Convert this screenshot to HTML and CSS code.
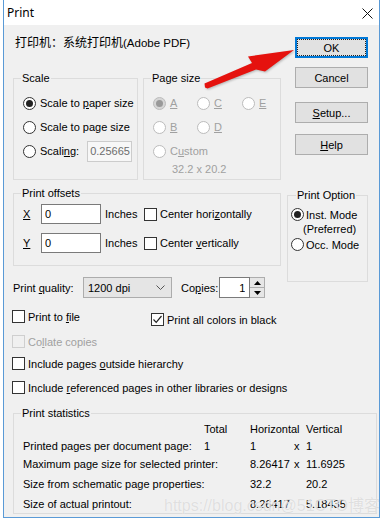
FILE: index.html
```html
<!DOCTYPE html>
<html lang="en">
<head>
    <meta charset="UTF-8">
    <title>Print</title>
    <link rel="stylesheet" href="styles.css">
</head>
<body>
    <div class="window">
        <div class="titlebar">
            <span class="title">Print</span>
            <svg class="close" width="11" height="11" viewBox="0 0 11 11">
                <path d="M0.5 0.5 L10.5 10.5 M10.5 0.5 L0.5 10.5" stroke="#111" stroke-width="1"/>
            </svg>
        </div>

        <div class="content">
            <div class="top">
                <div class="left">
                    <div class="printer">打印机：系统打印机<span class="latin">(Adobe PDF)</span></div>

                    <div class="groups">
                        <fieldset class="group scale">
                            <legend>Scale</legend>
                            <div class="opt"><span class="radio on"></span><span>Scale to <u>p</u>aper size</span></div>
                            <div class="opt"><span class="radio"></span><span>Scale to page size</span></div>
                            <div class="opt"><span class="radio"></span><span>Scali<u>n</u>g:</span><input class="scaling" value="0.25665" disabled></div>
                        </fieldset>

                        <fieldset class="group pagesize">
                            <legend>Page size</legend>
                            <div class="sizes">
                                <div class="opt dim"><span class="radio off on"></span><u>A</u></div>
                                <div class="opt dim"><span class="radio off"></span><u>C</u></div>
                                <div class="opt dim"><span class="radio off"></span><u>E</u></div>
                                <div class="opt dim"><span class="radio off"></span><u>B</u></div>
                                <div class="opt dim"><span class="radio off"></span><u>D</u></div>
                                <div></div>
                                <div class="opt dim custom"><span class="radio off"></span><span>C<u>u</u>stom</span></div>
                            </div>
                            <div class="custom-dim">32.2 x 20.2</div>
                        </fieldset>
                    </div>

                    <fieldset class="group offsets">
                        <legend>Print offsets</legend>
                        <div class="offset-row">
                            <u class="axis">X</u>
                            <input class="field" value="0">
                            <span class="unit">Inches</span>
                            <span class="check"></span><span>Center hori<u>z</u>ontally</span>
                        </div>
                        <div class="offset-row">
                            <u class="axis">Y</u>
                            <input class="field" value="0">
                            <span class="unit">Inches</span>
                            <span class="check"></span><span>Center <u>v</u>ertically</span>
                        </div>
                    </fieldset>
                </div>

                <div class="right">
                    <button class="btn default"><span class="focus">OK</span></button>
                    <button class="btn cancel">Cancel</button>
                    <button class="btn setup"><u>S</u>etup...</button>
                    <button class="btn help"><u>H</u>elp</button>

                    <fieldset class="group option">
                        <legend>Print Option</legend>
                        <div class="opt"><span class="radio on"></span><span>Inst. Mode</span></div>
                        <div class="pref">(Preferred)</div>
                        <div class="opt"><span class="radio"></span><span>Occ. Mode</span></div>
                    </fieldset>
                </div>
            </div>

            <div class="quality-row">
                <span class="quality-label">Print <u>q</u>uality:</span>
                <div class="select">
                    <span>1200 dpi</span>
                    <svg width="9" height="5" viewBox="0 0 9 5"><path d="M0.5 0.5 L4.5 4.5 L8.5 0.5" fill="none" stroke="#555"/></svg>
                </div>
                <span class="copies-label">Co<u>p</u>ies:</span>
                <input class="copies" value="1">
                <div class="spin">
                    <span><svg width="7" height="4" viewBox="0 0 7 4"><path d="M0 4 L3.5 0 L7 4 Z" fill="#000"/></svg></span>
                    <span><svg width="7" height="4" viewBox="0 0 7 4"><path d="M0 0 L3.5 4 L7 0 Z" fill="#000"/></svg></span>
                </div>
            </div>

            <div class="checks">
                <div class="opt first"><span class="check"></span><span>Print to <u>f</u>ile</span></div>
                <div class="opt black">
                    <span class="check">
                        <svg width="11" height="11" viewBox="0 0 11 11"><path d="M1.5 5.5 L4.2 8.3 L9.5 2" fill="none" stroke="#222" stroke-width="1.2"/></svg>
                    </span><span>Print all colors in black</span>
                </div>
            </div>
            <div class="opt dim collate"><span class="check off"></span><span>Co<u>l</u>late copies</span></div>
            <div class="opt include"><span class="check"></span><span>Include pages <u>o</u>utside hierarchy</span></div>
            <div class="opt include2"><span class="check"></span><span>Include <u>r</u>eferenced pages in other libraries or designs</span></div>

            <fieldset class="group stats">
                <legend>Print statistics</legend>
                <div class="stat-grid">
                    <span></span><span>Total</span><span>Horizontal</span><span></span><span>Vertical</span>
                    <span>Printed pages per document page:</span><span>1</span><span>1</span><span>x</span><span>1</span>
                    <span>Maximum page size for selected printer:</span><span></span><span>8.26417</span><span>x</span><span>11.6925</span>
                    <span>Size from schematic page properties:</span><span></span><span>32.2</span><span></span><span>20.2</span>
                    <span>Size of actual printout:</span><span></span><span>8.26417</span><span></span><span>5.18435</span>
                </div>
            </fieldset>
        </div>

        <svg class="arrow" width="100" height="50" viewBox="200 45 100 50">
            <polygon points="203.5,83.5 251,63 247,56.5 293,50 264,71.5 255,69.5 206.5,88.5 204,87.5" fill="#e5120e"/>
        </svg>

        <div class="watermark">https://blog.csdn@51CTO博客</div>
    </div>
</body>
</html>
```

FILE: styles.css
```css
* {
    box-sizing: border-box;
}

html {
    background: #fff;
}

body {
    margin: 0;
    font-family: "Liberation Sans", "Noto Sans CJK SC", sans-serif;
    font-size: 11px;
    color: #000;
}

u {
    text-decoration: underline;
    text-underline-offset: 1px;
}

.window {
    position: relative;
    margin-left: 3px;
    width: 377px;
    height: 518px;
    border: 1px solid #5a9ad6;
    border-top: 0;
    background: #f0f0f0;
    overflow: hidden;
}

.titlebar {
    height: 25px;
    background: #fff;
    display: flex;
    align-items: center;
    justify-content: space-between;
    padding: 0 6px 0 3px;
}

.title {
    font-family: "Noto Sans", sans-serif;
    font-size: 12px;
}

.close {
    margin-top: 1px;
}

.content {
    padding: 0 0 0 9px;
}

/* top part: left column + buttons */
.top {
    display: grid;
    grid-template-columns: 268px 81px;
    column-gap: 6px;
    align-items: start;
}

.printer {
    margin: 11px 0 0 2px;
    height: 14px;
    line-height: 14px;
    font-size: 12px;
    white-space: nowrap;
}

.printer .latin {
    font-size: 11.5px;
}

.groups {
    display: flex;
    gap: 5px;
    margin-top: 21px;
}

.group {
    margin: 0;
    border: 1px solid #dcdcdc;
    min-width: 0;
}

.group legend {
    line-height: 14px;
    padding: 0 1px;
    margin-left: -2px;
}

.scale {
    width: 125px;
    height: 109px;
    padding: 6px 0 0 9px;
}

.opt {
    display: flex;
    align-items: center;
    height: 24px;
    white-space: nowrap;
}

.radio {
    width: 13px;
    height: 13px;
    border: 1px solid #333;
    border-radius: 50%;
    background: #fff;
    margin-right: 4px;
    display: inline-flex;
    align-items: center;
    justify-content: center;
    flex-shrink: 0;
}

.radio.on::after {
    content: "";
    width: 7px;
    height: 7px;
    border-radius: 50%;
    background: #222;
}

.radio.off {
    border-color: #bcbcbc;
}

.radio.off.on {
    background: #d6d6d6;
}

.radio.off.on::after {
    background: #999;
}

.dim {
    color: #a0a0a0;
}

.scaling {
    margin-left: 8px;
    width: 45px;
    height: 21px;
    border: 1px solid #cccccc;
    background: #f7f7f7;
    color: #6d6d6d;
    font: inherit;
    padding: 0 0 0 2px;
}

.pagesize {
    width: 138px;
    height: 109px;
    padding: 6px 0 0 9px;
}

.sizes {
    display: grid;
    grid-template-columns: 44px 45px 40px;
    grid-auto-rows: 24px;
}

.sizes .custom {
    grid-column: 1 / 4;
}

.custom-dim {
    color: #a0a0a0;
    margin: -1px 0 0 19px;
    line-height: 14px;
}

.offsets {
    margin-top: 6px;
    height: 80px;
    padding: 4px 0 0 8px;
}

.offsets legend {
    margin-left: -1px;
}

.offset-row {
    display: flex;
    align-items: center;
    height: 20px;
    margin-bottom: 9px;
    white-space: nowrap;
}

.axis {
    width: 19px;
    padding-left: 1px;
}

.field {
    width: 60px;
    height: 20px;
    border: 1px solid #7a7a7a;
    background: #fff;
    font: inherit;
    padding: 0 0 0 3px;
}

.unit {
    width: 39px;
    margin-left: 4px;
}

.check {
    width: 13px;
    height: 13px;
    border: 1px solid #333;
    background: #fff;
    margin-right: 3px;
    display: inline-flex;
    align-items: center;
    justify-content: center;
    flex-shrink: 0;
}

.check.off {
    border-color: #cfcfcf;
    background: #f0f0f0;
}

/* right column */
.right {
    display: flex;
    flex-direction: column;
    margin-top: 12px;
}

.btn {
    margin-left: 8px;
    width: 73px;
    height: 21px;
    border: 1px solid #adadad;
    background: #e1e1e1;
    font: inherit;
    color: #000;
    padding: 0;
}

.btn.default {
    border: 1px solid #0078d7;
    padding: 1px;
    box-shadow: inset 0 0 0 1px #0078d7;
}

.focus {
    display: flex;
    align-items: center;
    justify-content: center;
    height: 100%;
    border: 1px dotted #222;
}

.cancel {
    margin-top: 9px;
}

.setup {
    margin-top: 14px;
}

.help {
    margin-top: 11px;
}

.option {
    margin-top: 33px;
    height: 94px;
    padding: 5px 0 0 3px;
    margin-bottom: -20px;
}

.option legend {
    margin-left: 5px;
}

.option .opt {
    height: 15px;
}

.option .radio {
    margin-right: 2px;
}

.pref {
    height: 15px;
    line-height: 15px;
    padding-left: 12px;
}

/* lower part */
.quality-row {
    display: flex;
    align-items: center;
    margin-top: 11px;
    height: 21px;
}

.quality-label {
    width: 70px;
}

.select {
    width: 89px;
    height: 21px;
    border: 1px solid #acacac;
    background: #e5e5e5;
    display: flex;
    align-items: center;
    justify-content: space-between;
    padding: 0 6px 0 4px;
}

.copies-label {
    margin-left: 9px;
    margin-right: 1px;
    flex-shrink: 0;
}

.copies {
    width: 31px;
    height: 21px;
    border: 1px solid #7a7a7a;
    background: #fff;
    font: inherit;
    text-align: right;
    padding: 0 4px 0 0;
}

.spin {
    width: 15px;
    height: 21px;
    border: 1px solid #adadad;
    border-left: 0;
    display: flex;
    flex-direction: column;
    background: #e6e6e6;
}

.spin span {
    flex: 1;
    display: flex;
    align-items: center;
    justify-content: center;
}

.spin span + span {
    border-top: 1px solid #adadad;
}

.checks {
    display: flex;
    align-items: flex-start;
    margin-top: 11px;
}

.checks .opt {
    height: 15px;
}

.checks .first {
    margin-left: -1px;
    width: 139px;
}

.checks .black {
    margin-top: 3px;
}

.collate,
.include,
.include2 {
    margin-left: -1px;
    height: 15px;
}

.collate {
    margin-top: 7px;
}

.include {
    margin-top: 7px;
}

.include2 {
    margin-top: 9px;
}

.stats {
    margin-top: 11px;
    width: 364px;
    height: 108px;
    padding: 1px 0 0 9px;
}

.stat-grid {
    display: grid;
    grid-template-columns: 181px 46px 44px 12px auto;
    grid-template-rows: 16px 17px 20px 20px 19px;
    align-items: center;
    white-space: nowrap;
}

.arrow {
    position: absolute;
    left: 197px;
    top: 45px;
    filter: drop-shadow(1px 1px 1px rgba(0, 0, 0, 0.25));
}

.watermark {
    position: absolute;
    left: 160px;
    top: 492px;
    font-size: 16px;
    color: rgba(210, 210, 210, 0.7);
    text-shadow: 0 0 1px #fff;
    white-space: nowrap;
}
```
